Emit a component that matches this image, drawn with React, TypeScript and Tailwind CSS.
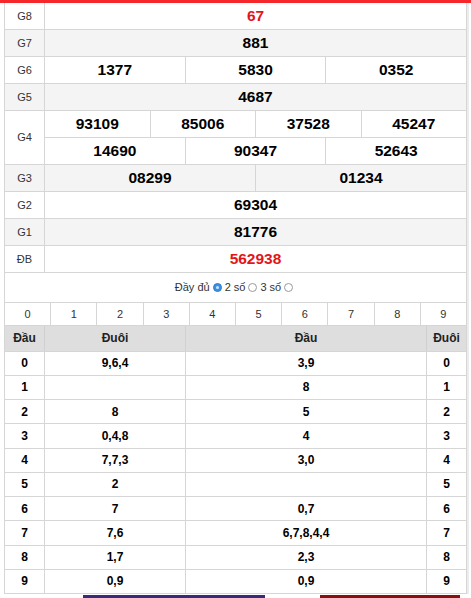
import React from "react";

const font = { fontFamily: '"Liberation Sans", Arial, sans-serif' };

type Prize = { label: string; rows: string[][]; red?: boolean; gray?: boolean };

const prizes: Prize[] = [
  { label: "G8", rows: [["67"]], red: true },
  { label: "G7", rows: [["881"]], gray: true },
  { label: "G6", rows: [["1377", "5830", "0352"]] },
  { label: "G5", rows: [["4687"]], gray: true },
  { label: "G4", rows: [["93109", "85006", "37528", "45247"], ["14690", "90347", "52643"]] },
  { label: "G3", rows: [["08299", "01234"]], gray: true },
  { label: "G2", rows: [["69304"]] },
  { label: "G1", rows: [["81776"]], gray: true },
  { label: "ĐB", rows: [["562938"]], red: true },
];

const headTail = [
  { d: "0", tail: "9,6,4", head: "3,9" },
  { d: "1", tail: "", head: "8" },
  { d: "2", tail: "8", head: "5" },
  { d: "3", tail: "0,4,8", head: "4" },
  { d: "4", tail: "7,7,3", head: "3,0" },
  { d: "5", tail: "2", head: "" },
  { d: "6", tail: "7", head: "0,7" },
  { d: "7", tail: "7,6", head: "6,7,8,4,4" },
  { d: "8", tail: "1,7", head: "2,3" },
  { d: "9", tail: "0,9", head: "0,9" },
];

function Radio({ checked }: { checked?: boolean }) {
  return checked ? (
    <span className="inline-flex items-center justify-center w-[9px] h-[9px] rounded-full bg-[#3d8fe0] border border-[#2f7fd0] mx-[3px]">
      <span className="w-[3px] h-[3px] rounded-full bg-[#cfe6ff]" />
    </span>
  ) : (
    <span className="inline-block w-[9px] h-[9px] rounded-full border border-[#9a9a9a] bg-white mx-[3px]" />
  );
}

export default function App() {
  return (
    <div className="w-[471px] h-[598px] bg-white overflow-hidden" style={font}>
      <div className="h-[3px] bg-[#f5272b]" />
      <div className="ml-[4px] w-[463px] border-l border-r border-[#d6d6d6] shadow-[2px_0_0_#ececec]">
        {prizes.map((p) => (
          <div
            key={p.label}
            className={`flex border-b border-[#d6d6d6] ${p.gray ? "bg-[#f4f4f4]" : "bg-white"}`}
          >
            <div className="w-[40px] shrink-0 border-r border-[#d6d6d6] flex items-center justify-center text-[11px] text-[#333]">
              {p.label}
            </div>
            <div className="flex-1 flex flex-col">
              {p.rows.map((r, ri) => (
                <div
                  key={ri}
                  className={
                    ri < p.rows.length - 1
                      ? "flex h-[27px] border-b border-[#d6d6d6]"
                      : "flex h-[26px]"
                  }
                >
                  {r.map((n, i) => (
                    <div
                      key={i}
                      className={`flex-1 flex items-center justify-center text-[15.5px] font-bold ${
                        i > 0 ? "border-l border-[#d6d6d6]" : ""
                      } ${p.red ? "text-[#e4141c]" : "text-black"}`}
                    >
                      {n}
                    </div>
                  ))}
                </div>
              ))}
            </div>
          </div>
        ))}

        <div className="h-[30px] border-b border-[#d6d6d6] flex items-center justify-center text-[11px] text-[#333]">
          <span>Đầy đủ</span>
          <Radio checked />
          <span>2 số</span>
          <Radio />
          <span>3 số</span>
          <Radio />
        </div>

        <div className="flex h-[23px] border-b border-[#d6d6d6]">
          {Array.from({ length: 10 }, (_, i) => (
            <div
              key={i}
              className={`flex-1 flex items-center justify-center text-[11px] text-[#333] ${
                i > 0 ? "border-l border-[#d6d6d6]" : ""
              }`}
            >
              {i}
            </div>
          ))}
        </div>

        <div className="flex h-[25.5px] border-b border-[#d6d6d6] bg-[#dedede] text-[12px] font-bold text-[#222]">
          <div className="w-[40px] shrink-0 border-r border-[#d0d0d0] flex items-center justify-center">Đầu</div>
          <div className="w-[141px] shrink-0 border-r border-[#d0d0d0] flex items-center justify-center">Đuôi</div>
          <div className="w-[241px] shrink-0 border-r border-[#d0d0d0] flex items-center justify-center">Đầu</div>
          <div className="flex-1 flex items-center justify-center">Đuôi</div>
        </div>

        {headTail.map((r) => (
          <div key={r.d} className="flex h-[24.25px] border-b border-[#d6d6d6] text-[12px] font-bold text-black">
            <div className="w-[40px] shrink-0 border-r border-[#d6d6d6] flex items-center justify-center">{r.d}</div>
            <div className="w-[141px] shrink-0 border-r border-[#d6d6d6] flex items-center justify-center">{r.tail}</div>
            <div className="w-[241px] shrink-0 border-r border-[#d6d6d6] flex items-center justify-center">{r.head}</div>
            <div className="flex-1 flex items-center justify-center">{r.d}</div>
          </div>
        ))}
      </div>
      <div className="flex h-[4px] mt-[1px]">
        <div className="w-[83px]" />
        <div className="w-[182px] bg-[#3a2a7a]" />
        <div className="w-[55px]" />
        <div className="w-[140px] bg-[#8a1010]" />
      </div>
    </div>
  );
}
